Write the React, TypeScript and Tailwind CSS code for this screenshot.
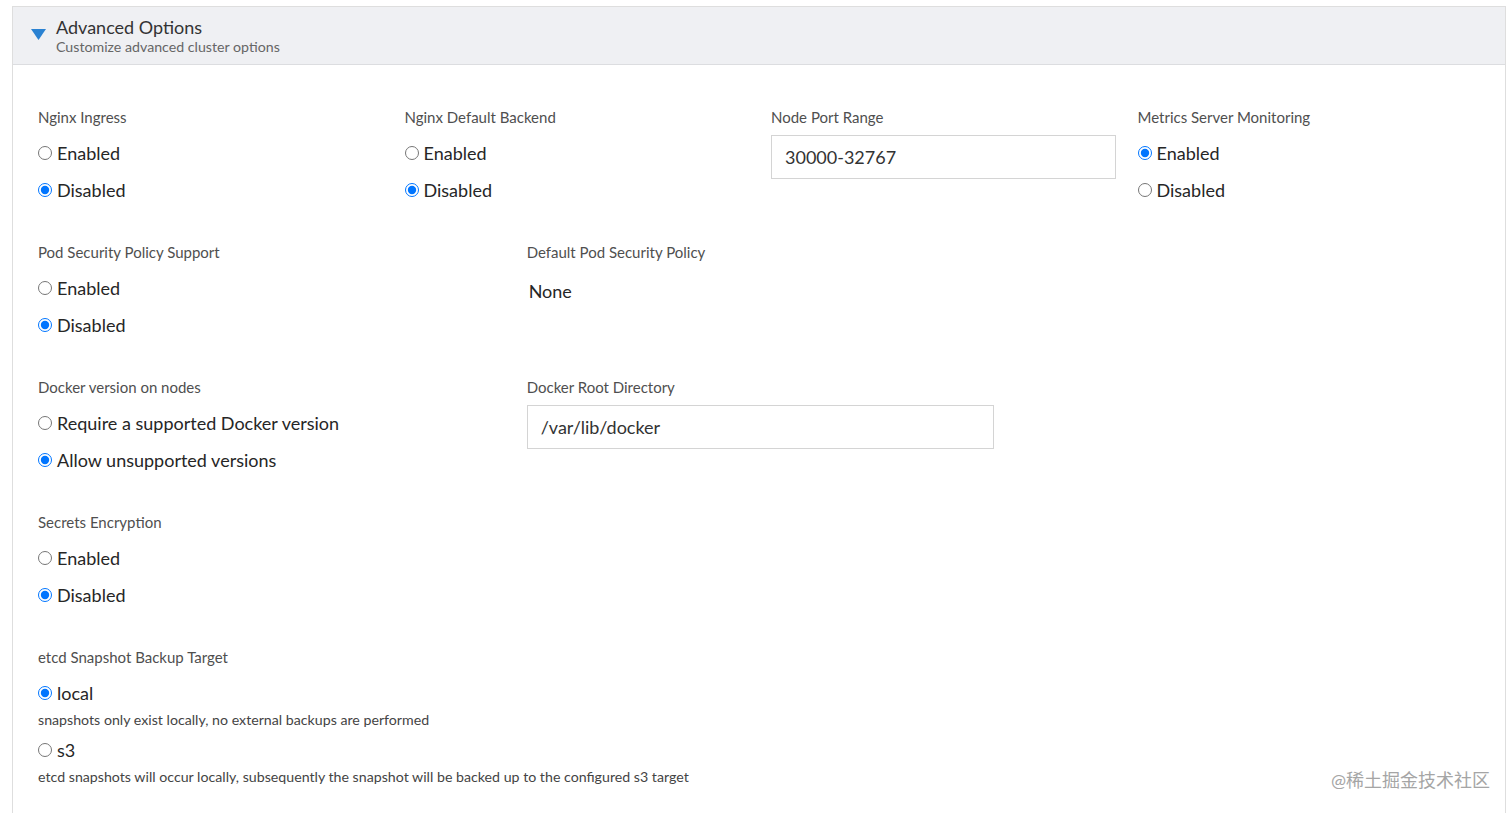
import React, { useState } from 'react';

const font = { fontFamily: 'Lato, "Noto Sans", sans-serif' };

type Opt = { value: string; label: string; help?: string };

const RadioGroup: React.FC<{ name: string; options: Opt[]; initial: string }> = ({ name, options, initial }) => {
  const [val, setVal] = useState(initial);
  return (
    <div className="mt-[13px] flex flex-col gap-[11px]">
      {options.map((o) => (
        <div key={o.value} className="flex flex-col">
          <label className="flex items-center h-[26px] text-[18px] text-[#262626] cursor-pointer">
            <input
              type="radio"
              name={name}
              checked={val === o.value}
              onChange={() => setVal(o.value)}
              className="w-[14px] h-[14px] m-0 mr-[5px] accent-[#0075ff]"
            />
            {o.label}
          </label>
          {o.help && <p className="text-[14px] leading-[20px] text-[#444] mt-[4px]">{o.help}</p>}
        </div>
      ))}
    </div>
  );
};

const Label: React.FC<{ children: React.ReactNode }> = ({ children }) => (
  <div className="text-[15px] leading-[20px] text-[#4f4f4f]">{children}</div>
);

const onOff = [
  { value: 'on', label: 'Enabled' },
  { value: 'off', label: 'Disabled' },
];

export default function App() {
  return (
    <div className="h-[813px] overflow-hidden bg-white pt-[6px] pl-[12px] pr-[6px] relative" style={font}>
      <div className="border border-[#dedede] min-h-[830px]">
        <div className="h-[58px] bg-[#eff0f3] border-b border-[#dcdde0] flex items-start">
          <svg width="15" height="11" viewBox="0 0 15 11" className="ml-[18px] mt-[22px]">
            <polygon points="0,0 15,0 7.5,11" fill="#2a82d2" />
          </svg>
          <div className="ml-[10px] mt-[9px]">
            <div className="text-[18px] leading-[22px] text-[#333]">Advanced Options</div>
            <div className="text-[14.2px] leading-[18px] text-[#666]">Customize advanced cluster options</div>
          </div>
        </div>

        <div className="pl-[25px] pr-[1px] pt-[42px]">
          <div className="grid grid-cols-4 h-[135px]">
            <div>
              <Label>Nginx Ingress</Label>
              <RadioGroup name="ingress" options={onOff} initial="off" />
            </div>
            <div>
              <Label>Nginx Default Backend</Label>
              <RadioGroup name="backend" options={onOff} initial="off" />
            </div>
            <div className="pr-[22px]">
              <Label>Node Port Range</Label>
              <input
                defaultValue="30000-32767"
                className="mt-[8px] w-full h-[44px] border border-[#d4d4d4] px-[13px] text-[18px] text-[#333] outline-none"
              />
            </div>
            <div>
              <Label>Metrics Server Monitoring</Label>
              <RadioGroup name="metrics" options={onOff} initial="on" />
            </div>
          </div>

          <div className="grid grid-cols-3 h-[135px]">
            <div>
              <Label>Pod Security Policy Support</Label>
              <RadioGroup name="psp" options={onOff} initial="off" />
            </div>
            <div>
              <Label>Default Pod Security Policy</Label>
              <div className="mt-[16px] ml-[2px] text-[18px] leading-[26px] text-[#262626]">None</div>
            </div>
          </div>

          <div className="grid grid-cols-3 h-[135px]">
            <div>
              <Label>Docker version on nodes</Label>
              <RadioGroup
                name="docker"
                options={[
                  { value: 'req', label: 'Require a supported Docker version' },
                  { value: 'any', label: 'Allow unsupported versions' },
                ]}
                initial="any"
              />
            </div>
            <div className="pr-[21px]">
              <Label>Docker Root Directory</Label>
              <input
                defaultValue="/var/lib/docker"
                className="mt-[8px] w-full h-[44px] border border-[#d4d4d4] px-[13px] text-[18px] text-[#333] outline-none"
              />
            </div>
          </div>

          <div className="h-[135px]">
            <Label>Secrets Encryption</Label>
            <RadioGroup name="secrets" options={onOff} initial="off" />
          </div>

          <div>
            <Label>etcd Snapshot Backup Target</Label>
            <div className="mt-[13px] flex flex-col">
              <SnapshotTargets />
            </div>
          </div>
        </div>
      </div>
      <div
        className="absolute right-[22px] top-[767px] text-[18px] text-[#a5a5a5]"
        style={{ fontFamily: 'Lato, "Noto Sans CJK SC", sans-serif' }}
      >
        @稀土掘金技术社区
      </div>
    </div>
  );
}

function SnapshotTargets() {
  const [val, setVal] = useState('local');
  const opts = [
    { value: 'local', label: 'local', help: 'snapshots only exist locally, no external backups are performed' },
    { value: 's3', label: 's3', help: 'etcd snapshots will occur locally, subsequently the snapshot will be backed up to the configured s3 target' },
  ];
  return (
    <>
      {opts.map((o) => (
        <div key={o.value} className="flex flex-col mb-[7px]">
          <label className="flex items-center h-[26px] text-[18px] text-[#262626] cursor-pointer">
            <input
              type="radio"
              name="etcd"
              checked={val === o.value}
              onChange={() => setVal(o.value)}
              className="w-[14px] h-[14px] m-0 mr-[5px] accent-[#0075ff]"
            />
            {o.label}
          </label>
          <p className="text-[14.2px] leading-[20px] text-[#444] mt-[4px]">{o.help}</p>
        </div>
      ))}
    </>
  );
}
